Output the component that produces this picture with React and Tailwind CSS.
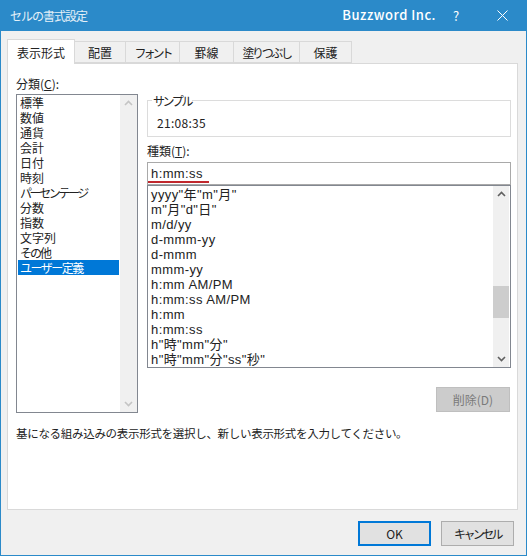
const font = { fontFamily: '"Noto Sans CJK JP", "Noto Sans", sans-serif' }
const latinFont = { fontFamily: '"Liberation Sans", "Noto Sans CJK JP", sans-serif' }

const tabs = [
  { label: 'フォント', cls: 'w-[54px] tracking-[-3px]' },
  { label: '罫線', cls: 'w-[54px]' },
  { label: '塗りつぶし', cls: 'w-[66px] tracking-[-2.4px]' },
  { label: '保護', cls: 'w-[52px]' },
]
const categories = [
  { label: '標準', cls: '' },
  { label: '数値', cls: '' },
  { label: '通貨', cls: '' },
  { label: '会計', cls: '' },
  { label: '日付', cls: '' },
  { label: '時刻', cls: '' },
  { label: 'パーセンテージ', cls: 'tracking-[-2.4px]' },
  { label: '分数', cls: '' },
  { label: '指数', cls: '' },
  { label: '文字列', cls: '' },
  { label: 'その他', cls: 'tracking-[-2px]' },
]
const formats = ['yyyy"年"m"月"', 'm"月"d"日"', 'm/d/yy', 'd-mmm-yy', 'd-mmm', 'mmm-yy', 'h:mm AM/PM', 'h:mm:ss AM/PM', 'h:mm', 'h:mm:ss', 'h"時"mm"分"', 'h"時"mm"分"ss"秒"']

function Arrow({ up, className }) {
  return (
    <svg width="9" height="6" viewBox="0 0 9 6" className={className}>
      <path d={up ? 'M1 5 L4.5 1.5 L8 5' : 'M1 1 L4.5 4.5 L8 1'} fill="none" stroke="currentColor" strokeWidth="1.6" />
    </svg>
  )
}

export default function App() {
  return (
    <div className="w-[527px] h-[556px] flex flex-col bg-[#f0f0f0] border border-t-0 border-[#2b8ac9] text-[12px] leading-[15px] text-[#222]" style={font}>
      <div className="h-[31px] -mx-px flex items-center bg-[#2b8ac9] text-white shrink-0">
        <span className="ml-[10px] text-[12px] tracking-[-1px] text-[#e4f0f8]">セルの書式設定</span>
        <span className="ml-auto mr-[15px] text-[13px] font-medium tracking-[0.5px] -mt-[3px]">Buzzword Inc.</span>
        <span className="w-[10px] text-center text-[13px] mr-[36px]">?</span>
        <svg width="11" height="11" viewBox="0 0 11 11" className="mr-[19px]">
          <path d="M0.5 0.5 L10.5 10.5 M10.5 0.5 L0.5 10.5" stroke="white" strokeWidth="1" fill="none" />
        </svg>
      </div>

      <div className="ml-[6px] mt-[8px] h-[24px] flex items-end shrink-0">
        <div className="relative z-10 w-[68px] h-[25px] -mb-px bg-white border border-b-0 border-[#d9d9d9] flex items-center justify-center">表示形式</div>
        <div className="w-[51px] h-[22px] bg-[#f0f0f0] border border-l-0 border-[#d9d9d9] flex items-center justify-center">配置</div>
        {tabs.map(t => (
          <div key={t.label} className={`${t.cls} h-[22px] bg-[#f0f0f0] border border-l-0 border-[#d9d9d9] flex items-center justify-center`}>{t.label}</div>
        ))}
      </div>

      <div className="ml-[6px] w-[511px] h-[447px] bg-white border border-[#d9d9d9] flex flex-col shrink-0">
        <div className="flex">
          <div className="ml-[8px] w-[122px]">
            <div className="mt-[11px] h-[16px] flex items-center">分類(<span className="underline">C</span>):</div>
            <div className="mt-[3px] h-[319px] border border-[#828790] flex">
              <div className="flex-1" style={latinFont}>
                {categories.map(c => (
                  <div key={c.label} className={`${c.cls} h-[15px] pl-[3px] leading-[18px]`}>{c.label}</div>
                ))}
                <div className="h-[15px] mx-px pl-[2px] leading-[18px] bg-[#0078d7] text-white tracking-[-1.5px]">ユーザー定義</div>
              </div>
              <div className="w-[17px] bg-[#f0f0f0] flex flex-col items-center justify-between py-[5px] text-[#c4c4c4]">
                <Arrow up />
                <Arrow />
              </div>
            </div>
          </div>

          <div className="ml-[9px] w-[364px]">
            <div className="relative mt-[36px] h-[37px] border border-[#dcdcdc]">
              <span className="absolute -top-[8px] left-[4px] bg-white px-[1px] tracking-[-2.4px]">サンプル</span>
              <div className="mt-[14px] ml-[9px] tracking-[0.3px]">21:08:35</div>
            </div>
            <div className="mt-[5px] h-[16px] flex items-center">種類(<span className="underline">T</span>):</div>
            <div className="relative mt-[4px] h-[23px] border border-[#a9a9a9] pl-[3px] flex items-center text-[13px] tracking-[0.4px]" style={latinFont}>
              h:mm:ss
              <div className="absolute left-0 bottom-[1px] w-[61px] h-[2px] bg-[#c0272d]" />
            </div>
            <div className="h-[183px] border border-[#828790] flex overflow-hidden">
              <div className="flex-1 pl-[3px] pt-[2px] text-[13px] tracking-[0.4px]" style={latinFont}>
                {formats.map(f => (
                  <div key={f} className="h-[15px] leading-[13px] whitespace-nowrap">{f}</div>
                ))}
              </div>
              <div className="relative w-[16px] mr-px bg-[#f0f0f0] flex flex-col items-center justify-between py-[5px] text-[#606060]">
                <Arrow up />
                <div className="absolute left-0 right-0 top-[100px] h-[32px] bg-[#cdcdcd]" />
                <Arrow />
              </div>
            </div>
            <div className="mt-[19px] ml-[289px] w-[74px] h-[25px] bg-[#cccccc] border border-[#bfbfbf] text-[#7a7a7a] flex items-center justify-center">削除(D)</div>
          </div>
        </div>
        <div className="ml-[8px] mt-[13px] text-[11.5px] tracking-[-0.3px] whitespace-nowrap">基になる組み込みの表示形式を選択し、新しい表示形式を入力してください。</div>
      </div>

      <div className="mt-[11px] flex justify-end shrink-0">
        <div className="w-[73px] h-[25px] bg-[#e1e1e1] border-2 border-[#0078d7] flex items-center justify-center">OK</div>
        <div className="ml-[10px] mr-[12px] w-[73px] h-[25px] bg-[#e1e1e1] border border-[#adadad] flex items-center justify-center tracking-[-2.6px]">キャンセル</div>
      </div>
    </div>
  )
}
